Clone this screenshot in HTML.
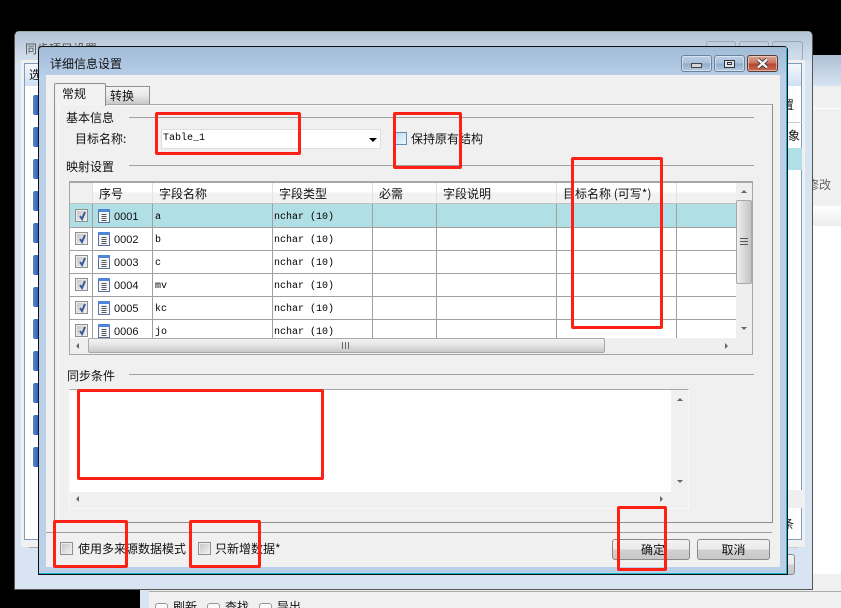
<!DOCTYPE html>
<html><head><meta charset="utf-8">
<style>
html,body{margin:0;padding:0;background:#000;}
#p{position:relative;width:841px;height:608px;overflow:hidden;background:#000;font:12px/14px "WenQuanYi Zen Hei","Noto Sans CJK SC","Liberation Sans",sans-serif;color:#111;}
#p div,#p span{position:absolute;box-sizing:border-box;white-space:nowrap;}
.l{background:#a0a0a0;height:1px;}
.v{background:#a0a0a0;width:1px;}
.t{height:14px;}
.m{font:10px/14px "Liberation Mono",monospace;color:#000;}
.n{font:11px/14px "Liberation Sans",sans-serif;color:#111;}
.chk{width:13px;height:13px;border:1px solid #8e8f8f;background:linear-gradient(135deg,#c4c4c4,#f2f2f2);box-shadow:inset 0 0 0 1px #ececec;}
.chk svg{position:absolute;left:1px;top:0;}
.ico{width:12px;height:14px;}
.ico svg{position:absolute;left:0;top:0;}
.red{border:3px solid #ff2015;border-radius:2px;z-index:9;}
.sb{background:#efefef;}
.thumb{background:linear-gradient(90deg,#efefef,#d8d8d8 50%,#c4c4c4);border:1px solid #a8a8a8;border-radius:2px;}
.thh{background:linear-gradient(#f4f4f4,#e4e4e4 45%,#c8c8c8);border:1px solid #a8a8a8;border-radius:2px;}
.up,.dn,.lf,.rt{width:0;height:0;}
.up{border:3px solid transparent;border-top:0;border-bottom:3px solid #666;}
.dn{border:3px solid transparent;border-bottom:0;border-top:3px solid #666;}
.lf{border:3px solid transparent;border-left:0;border-right:3px solid #666;}
.rt{border:3px solid transparent;border-right:0;border-left:3px solid #666;}
.btn{height:21px;border:1px solid #8a8a8a;border-radius:3px;background:linear-gradient(#f2f2f2,#ebebeb 48%,#d0d0d0 52%,#c8c8c8);text-align:center;line-height:19px;}
.wb{height:17px;top:55px;border:1px solid #6f8199;border-radius:3px;box-shadow:inset 0 0 0 1px rgba(255,255,255,.45);background:linear-gradient(#bcd0e6,#a9c1dd 48%,#8fabc9 52%,#b4cce4);}
</style></head><body><div id="p">

<!-- right background window -->
<div style="left:812px;top:55px;width:29px;height:535px;background:#f0f0f0;"></div>
<div style="left:812px;top:55px;width:29px;height:31px;background:linear-gradient(#aebfd4,#d6e3f2);"></div>
<div style="left:812px;top:108px;width:29px;height:1px;background:#fff;"></div>
<div style="left:812px;top:206px;width:29px;height:20px;background:linear-gradient(#fff,#ececec);"></div>
<div style="left:812px;top:226px;width:29px;height:349px;background:#fff;"></div>
<div class="t" style="left:807px;top:178px;color:#666;">修改</div>
<div style="left:812px;top:574px;width:29px;height:34px;background:#f0f0f0;"></div>
<div style="left:812px;top:591px;width:29px;height:1px;background:#999;"></div>

<!-- bottom background window -->
<div style="left:140px;top:589px;width:701px;height:19px;background:#f0f0f0;"></div>
<div style="left:140px;top:589px;width:9px;height:19px;background:#d8e4f2;"></div>
<div style="left:149px;top:591px;width:692px;height:1px;background:#aaa;"></div>
<div style="left:155px;top:603px;width:13px;height:10px;border:1px solid #999;border-radius:3px;background:#fafafa;"></div>
<div style="left:207px;top:603px;width:13px;height:10px;border:1px solid #999;border-radius:3px;background:#fafafa;"></div>
<div style="left:259px;top:603px;width:13px;height:10px;border:1px solid #999;border-radius:3px;background:#fafafa;"></div>
<div class="t" style="left:173px;top:600px;">刷新</div>
<div class="t" style="left:225px;top:600px;">查找</div>
<div class="t" style="left:277px;top:600px;">导出</div>

<!-- outer window -->
<div style="left:14px;top:31px;width:799px;height:559px;background:#d8e4f2;border:1px solid #555;border-top-color:#9aa;border-radius:5px 5px 0 0;"></div>
<div style="left:15px;top:32px;width:797px;height:30px;background:linear-gradient(#b4c4d6,#d4e1ef);border-radius:5px 5px 0 0;"></div>
<div class="t" style="left:25px;top:42px;color:#555;">同步项目设置</div>
<div style="left:706px;top:41px;width:30px;height:20px;border:1px solid #9aa8b8;border-radius:3px;"></div>
<div style="left:739px;top:41px;width:30px;height:20px;border:1px solid #9aa8b8;border-radius:3px;"></div>
<div style="left:772px;top:41px;width:31px;height:20px;border:1px solid #9aa8b8;border-radius:3px;"></div>
<div style="left:21px;top:60px;width:784px;height:487px;background:#f0f0f0;"></div>
<div style="left:24px;top:63px;width:778px;height:477px;background:#fff;border:1px solid #7f9db9;"></div>
<div style="left:25px;top:64px;width:776px;height:22px;background:linear-gradient(#f4f8fc,#cfe0f3);"></div>
<div class="t" style="left:29px;top:68px;">选</div>
<div style="left:33px;top:95px;width:6px;height:20px;background:linear-gradient(90deg,#5d86c4,#1f5cc0);border-radius:2px 0 0 2px;"></div>
<div style="left:33px;top:127px;width:6px;height:20px;background:linear-gradient(90deg,#5d86c4,#1f5cc0);border-radius:2px 0 0 2px;"></div>
<div style="left:33px;top:159px;width:6px;height:20px;background:linear-gradient(90deg,#5d86c4,#1f5cc0);border-radius:2px 0 0 2px;"></div>
<div style="left:33px;top:191px;width:6px;height:20px;background:linear-gradient(90deg,#5d86c4,#1f5cc0);border-radius:2px 0 0 2px;"></div>
<div style="left:33px;top:223px;width:6px;height:20px;background:linear-gradient(90deg,#5d86c4,#1f5cc0);border-radius:2px 0 0 2px;"></div>
<div style="left:33px;top:255px;width:6px;height:20px;background:linear-gradient(90deg,#5d86c4,#1f5cc0);border-radius:2px 0 0 2px;"></div>
<div style="left:33px;top:287px;width:6px;height:20px;background:linear-gradient(90deg,#5d86c4,#1f5cc0);border-radius:2px 0 0 2px;"></div>
<div style="left:33px;top:319px;width:6px;height:20px;background:linear-gradient(90deg,#5d86c4,#1f5cc0);border-radius:2px 0 0 2px;"></div>
<div style="left:33px;top:351px;width:6px;height:20px;background:linear-gradient(90deg,#5d86c4,#1f5cc0);border-radius:2px 0 0 2px;"></div>
<div style="left:33px;top:383px;width:6px;height:20px;background:linear-gradient(90deg,#5d86c4,#1f5cc0);border-radius:2px 0 0 2px;"></div>
<div style="left:33px;top:415px;width:6px;height:20px;background:linear-gradient(90deg,#5d86c4,#1f5cc0);border-radius:2px 0 0 2px;"></div>
<div style="left:33px;top:447px;width:6px;height:20px;background:linear-gradient(90deg,#5d86c4,#1f5cc0);border-radius:2px 0 0 2px;"></div>
<div class="t" style="left:782px;top:98px;">置</div>
<div style="left:788px;top:122px;width:14px;height:1px;background:#ccc;"></div>
<div class="t" style="left:788px;top:129px;">象</div>
<div style="left:788px;top:148px;width:14px;height:22px;background:#b0dfe5;"></div>
<div style="left:788px;top:490px;width:14px;height:18px;background:#efefef;"></div>
<div class="t" style="left:782px;top:517px;">条</div>
<div style="left:29px;top:547px;width:9px;height:1px;background:#aaa;"></div>
<div style="left:787px;top:547px;width:11px;height:1px;background:#ccc;"></div>
<div class="btn" style="left:780px;top:554px;width:15px;height:21px;"></div>

<!-- dialog -->
<div style="left:38px;top:46px;width:750px;height:529px;background:#b9d0e8;border:1px solid #111;border-radius:4px 4px 0 0;"></div>
<div style="left:786px;top:47px;width:1px;height:527px;background:#16b8d0;"></div>
<div style="left:39px;top:573px;width:748px;height:1px;background:#16b8d0;"></div>
<div style="left:39px;top:47px;width:747px;height:28px;background:linear-gradient(#a2bbd6,#b6cee8);border-radius:4px 4px 0 0;"></div>
<div class="t" style="left:50px;top:57px;font-size:12px;color:#111;">详细信息设置</div>
<div class="wb" style="left:681px;width:31px;"></div>
<div style="left:691px;top:63px;width:11px;height:5px;background:#d4d4d4;border:1px solid #444;"></div>
<div class="wb" style="left:714px;width:31px;"></div>
<div style="left:724px;top:60px;width:11px;height:8px;border:1px solid #333;background:#dde6f0;"></div>
<div style="left:727px;top:62px;width:5px;height:3px;border:1px solid #333;"></div>
<div class="wb" style="left:747px;width:31px;background:linear-gradient(#d8a090,#c97560 48%,#b8442c 52%,#c66a52);border-color:#5a3a34;"></div>
<svg style="position:absolute;left:756px;top:58px;" width="13" height="11"><path d="M2 1.5 L11 9.5 M11 1.5 L2 9.5" stroke="#333" stroke-width="4"/><path d="M2 1.5 L11 9.5 M11 1.5 L2 9.5" stroke="#f4f4f4" stroke-width="2.4"/></svg>

<div style="left:46px;top:75px;width:734px;height:492px;background:#f0f0f0;"></div>

<!-- tab page -->
<div style="left:54px;top:104px;width:719px;height:419px;background:#f0f0f0;border:1px solid #8e8e8e;border-left:0;border-top-color:#a8a8a8;"></div>
<div style="left:54px;top:104px;width:5px;height:419px;background:#f0f0f0;border-left:1px solid #8e8e8e;"></div>
<div style="left:58px;top:105px;width:714px;height:417px;box-shadow:inset 1px 1px 0 #fafafa;"></div>
<div style="left:105px;top:86px;width:45px;height:18px;border:1px solid #8e8e8e;border-bottom:0;background:linear-gradient(#f4f4f4,#e8e8e8 50%,#c8c8c8);"></div>
<div class="t" style="left:110px;top:89px;">转换</div>
<div style="left:54px;top:83px;width:52px;height:23px;border:1px solid #8e8e8e;border-bottom:0;background:#f2f2f2;border-radius:2px 2px 0 0;"></div>
<div class="t" style="left:62px;top:87px;">常规</div>

<!-- group: basic -->
<div class="t" style="left:66px;top:111px;">基本信息</div>
<div class="l" style="left:129px;top:117px;width:625px;"></div>
<div class="t" style="left:75px;top:132px;">目标名称:</div>
<div style="left:161px;top:129px;width:220px;height:20px;background:#fff;border:1px solid #dcdfe3;border-radius:2px;"></div>
<div class="m" style="left:163px;top:132px;">Table_1</div>
<div class="dn" style="left:369px;top:138px;border-width:4px 4px 0;border-top-color:#000;"></div>
<div style="left:395px;top:132px;width:12px;height:13px;border:1px solid #5f8db4;background:linear-gradient(135deg,#bcdcf4,#eef7fd);"></div>
<div class="t" style="left:411px;top:132px;">保持原有结构</div>

<!-- group: mapping -->
<div class="t" style="left:66px;top:160px;">映射设置</div>
<div class="l" style="left:129px;top:165px;width:625px;"></div>

<!-- table -->
<div style="left:69px;top:181px;width:684px;height:174px;background:#f0f0f0;border:1px solid #a6a6a6;border-top:2px solid #a6a6a6;"></div>
<div style="left:70px;top:183px;width:666px;height:20px;background:linear-gradient(#fff,#fff 45%,#f2f2f2 50%,#f2f2f2);"></div>
<div style="left:70px;top:183px;width:22px;height:20px;background:#f0f0f0;"></div>
<div style="left:70px;top:203px;width:666px;height:1px;background:#c0c0c0;"></div>
<div style="left:70px;top:204px;width:666px;height:134px;background:#fff;"></div>
<div style="left:70px;top:204px;width:666px;height:23px;background:#b0dfe5;"></div>
<div class="l" style="left:70px;top:227px;width:666px;"></div>
<div class="l" style="left:70px;top:250px;width:666px;"></div>
<div class="l" style="left:70px;top:273px;width:666px;"></div>
<div class="l" style="left:70px;top:296px;width:666px;"></div>
<div class="l" style="left:70px;top:319px;width:666px;"></div>
<div class="v" style="left:92px;top:204px;height:134px;"></div>
<div class="v" style="left:152px;top:204px;height:134px;"></div>
<div class="v" style="left:272px;top:204px;height:134px;"></div>
<div class="v" style="left:372px;top:204px;height:134px;"></div>
<div class="v" style="left:436px;top:204px;height:134px;"></div>
<div class="v" style="left:556px;top:204px;height:134px;"></div>
<div class="v" style="left:676px;top:204px;height:134px;"></div>
<div style="left:92px;top:183px;width:1px;height:20px;background:#e2e2e2;"></div>
<div style="left:152px;top:183px;width:1px;height:20px;background:#e2e2e2;"></div>
<div style="left:272px;top:183px;width:1px;height:20px;background:#e2e2e2;"></div>
<div style="left:372px;top:183px;width:1px;height:20px;background:#e2e2e2;"></div>
<div style="left:436px;top:183px;width:1px;height:20px;background:#e2e2e2;"></div>
<div style="left:556px;top:183px;width:1px;height:20px;background:#e2e2e2;"></div>
<div style="left:676px;top:183px;width:1px;height:20px;background:#e2e2e2;"></div>
<div class="t" style="left:99px;top:187px;">序号</div>
<div class="t" style="left:159px;top:187px;">字段名称</div>
<div class="t" style="left:279px;top:187px;">字段类型</div>
<div class="t" style="left:379px;top:187px;">必需</div>
<div class="t" style="left:443px;top:187px;">字段说明</div>
<div class="t" style="left:563px;top:187px;">目标名称 (可写*)</div>

<!-- rows -->
<div class="chk" style="left:75px;top:209px;"><svg width="11" height="11"><path d="M3 6 L5 9 L8 2" fill="none" stroke="#3c5a9a" stroke-width="2"/></svg></div>
<div class="ico" style="left:98px;top:209px;"><svg width="12" height="14"><rect x=".5" y=".5" width="11" height="13" fill="#f4f6f8" stroke="#5b7298"/><rect x="0" y="0" width="12" height="3" fill="#4f86d8"/><path d="M3.5 5.5h5M3.5 7.5h5M3.5 9.5h5M3.5 11.5h5" stroke="#555" stroke-width="1"/></svg></div><div class="n" style="left:114px;top:210px;">0001</div>
<div class="m" style="left:155px;top:211px;">a</div><div class="m" style="left:274px;top:211px;">nchar (10)</div>

<div class="chk" style="left:75px;top:232px;"><svg width="11" height="11"><path d="M3 6 L5 9 L8 2" fill="none" stroke="#3c5a9a" stroke-width="2"/></svg></div>
<div class="ico" style="left:98px;top:232px;"><svg width="12" height="14"><rect x=".5" y=".5" width="11" height="13" fill="#f4f6f8" stroke="#5b7298"/><rect x="0" y="0" width="12" height="3" fill="#4f86d8"/><path d="M3.5 5.5h5M3.5 7.5h5M3.5 9.5h5M3.5 11.5h5" stroke="#555" stroke-width="1"/></svg></div><div class="n" style="left:114px;top:233px;">0002</div>
<div class="m" style="left:155px;top:234px;">b</div><div class="m" style="left:274px;top:234px;">nchar (10)</div>

<div class="chk" style="left:75px;top:255px;"><svg width="11" height="11"><path d="M3 6 L5 9 L8 2" fill="none" stroke="#3c5a9a" stroke-width="2"/></svg></div>
<div class="ico" style="left:98px;top:255px;"><svg width="12" height="14"><rect x=".5" y=".5" width="11" height="13" fill="#f4f6f8" stroke="#5b7298"/><rect x="0" y="0" width="12" height="3" fill="#4f86d8"/><path d="M3.5 5.5h5M3.5 7.5h5M3.5 9.5h5M3.5 11.5h5" stroke="#555" stroke-width="1"/></svg></div><div class="n" style="left:114px;top:256px;">0003</div>
<div class="m" style="left:155px;top:257px;">c</div><div class="m" style="left:274px;top:257px;">nchar (10)</div>

<div class="chk" style="left:75px;top:278px;"><svg width="11" height="11"><path d="M3 6 L5 9 L8 2" fill="none" stroke="#3c5a9a" stroke-width="2"/></svg></div>
<div class="ico" style="left:98px;top:278px;"><svg width="12" height="14"><rect x=".5" y=".5" width="11" height="13" fill="#f4f6f8" stroke="#5b7298"/><rect x="0" y="0" width="12" height="3" fill="#4f86d8"/><path d="M3.5 5.5h5M3.5 7.5h5M3.5 9.5h5M3.5 11.5h5" stroke="#555" stroke-width="1"/></svg></div><div class="n" style="left:114px;top:279px;">0004</div>
<div class="m" style="left:155px;top:280px;">mv</div><div class="m" style="left:274px;top:280px;">nchar (10)</div>

<div class="chk" style="left:75px;top:301px;"><svg width="11" height="11"><path d="M3 6 L5 9 L8 2" fill="none" stroke="#3c5a9a" stroke-width="2"/></svg></div>
<div class="ico" style="left:98px;top:301px;"><svg width="12" height="14"><rect x=".5" y=".5" width="11" height="13" fill="#f4f6f8" stroke="#5b7298"/><rect x="0" y="0" width="12" height="3" fill="#4f86d8"/><path d="M3.5 5.5h5M3.5 7.5h5M3.5 9.5h5M3.5 11.5h5" stroke="#555" stroke-width="1"/></svg></div><div class="n" style="left:114px;top:302px;">0005</div>
<div class="m" style="left:155px;top:303px;">kc</div><div class="m" style="left:274px;top:303px;">nchar (10)</div>

<div class="chk" style="left:75px;top:324px;"><svg width="11" height="11"><path d="M3 6 L5 9 L8 2" fill="none" stroke="#3c5a9a" stroke-width="2"/></svg></div>
<div class="ico" style="left:98px;top:324px;"><svg width="12" height="14"><rect x=".5" y=".5" width="11" height="13" fill="#f4f6f8" stroke="#5b7298"/><rect x="0" y="0" width="12" height="3" fill="#4f86d8"/><path d="M3.5 5.5h5M3.5 7.5h5M3.5 9.5h5M3.5 11.5h5" stroke="#555" stroke-width="1"/></svg></div><div class="n" style="left:114px;top:325px;">0006</div>
<div class="m" style="left:155px;top:326px;">jo</div><div class="m" style="left:274px;top:326px;">nchar (10)</div>

<!-- table scrollbars -->
<div class="sb" style="left:736px;top:183px;width:16px;height:155px;"></div>
<div class="up" style="left:741px;top:190px;"></div>
<div class="dn" style="left:741px;top:327px;"></div>
<div class="thumb" style="left:736px;top:200px;width:16px;height:84px;"></div>
<div style="left:740px;top:238px;width:8px;height:7px;border-top:1px solid #555;border-bottom:1px solid #555;"></div>
<div style="left:740px;top:241px;width:8px;height:1px;background:#555;"></div>
<div class="sb" style="left:70px;top:338px;width:682px;height:16px;"></div>
<div class="lf" style="left:76px;top:343px;"></div>
<div class="rt" style="left:725px;top:343px;"></div>
<div class="thh" style="left:88px;top:338px;width:517px;height:15px;"></div>
<div style="left:342px;top:342px;width:7px;height:7px;border-left:1px solid #666;border-right:1px solid #666;"></div>
<div style="left:345px;top:342px;width:1px;height:7px;background:#666;"></div>

<!-- group: condition -->
<div class="t" style="left:67px;top:369px;">同步条件</div>
<div class="l" style="left:129px;top:374px;width:625px;"></div>
<div style="left:69px;top:389px;width:620px;height:120px;background:#f0f0f0;border:1px solid #f8f8f8;border-top:1px solid #a6a6a6;"></div>
<div style="left:70px;top:390px;width:601px;height:102px;background:#fff;"></div>
<div class="up" style="left:677px;top:398px;"></div>
<div class="dn" style="left:677px;top:480px;"></div>
<div class="lf" style="left:76px;top:496px;"></div>
<div class="rt" style="left:660px;top:496px;"></div>

<!-- footer -->
<div class="l" style="left:46px;top:532px;width:726px;"></div>
<div class="chk" style="left:60px;top:542px;"></div>
<div class="t" style="left:78px;top:542px;">使用多来源数据模式</div>
<div class="chk" style="left:198px;top:542px;"></div>
<div class="t" style="left:215px;top:542px;">只新增数据*</div>
<div class="btn" style="left:612px;top:539px;width:78px;padding-left:4px;">确定</div>
<div class="btn" style="left:697px;top:539px;width:73px;">取消</div>

<!-- red annotations -->
<div class="red" style="left:155px;top:112px;width:146px;height:43px;"></div>
<div class="red" style="left:393px;top:112px;width:69px;height:57px;"></div>
<div class="red" style="left:571px;top:157px;width:92px;height:172px;"></div>
<div class="red" style="left:77px;top:389px;width:247px;height:91px;"></div>
<div class="red" style="left:53px;top:520px;width:75px;height:48px;"></div>
<div class="red" style="left:189px;top:520px;width:72px;height:48px;"></div>
<div class="red" style="left:617px;top:506px;width:50px;height:65px;"></div>

</div></body></html>
